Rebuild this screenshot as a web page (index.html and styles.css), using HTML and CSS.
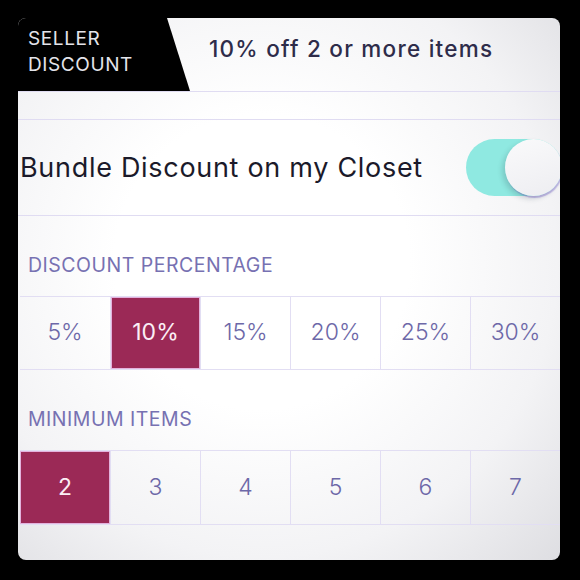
FILE: index.html
```html
<!DOCTYPE html>
<html lang="en">
<head>
    <meta charset="UTF-8">
    <meta name="viewport" content="width=device-width, initial-scale=1.0">
    <title>Seller Discount</title>
    <link rel="stylesheet" href="styles.css">
</head>
<body>

<div class="panel">
    <div class="head">
        <div class="tag">SELLER<br>DISCOUNT</div>
        <div class="offer">10% off 2 or more items</div>
    </div>

    <div class="spacer"></div>

    <div class="bundle">
        <span class="bundle-text">Bundle Discount on my Closet</span>
        <div class="toggle on">
            <div class="knob"></div>
        </div>
    </div>

    <h3 class="section-label">DISCOUNT PERCENTAGE</h3>
    <div class="choices percent">
        <div class="choice">5%</div>
        <div class="choice selected">10%</div>
        <div class="choice">15%</div>
        <div class="choice">20%</div>
        <div class="choice">25%</div>
        <div class="choice">30%</div>
    </div>

    <h3 class="section-label">MINIMUM ITEMS</h3>
    <div class="choices items">
        <div class="choice selected">2</div>
        <div class="choice">3</div>
        <div class="choice">4</div>
        <div class="choice">5</div>
        <div class="choice">6</div>
        <div class="choice">7</div>
    </div>
</div>

</body>
</html>
```

FILE: styles.css
```css
body {
    font-family: 'Inter', 'Liberation Sans', sans-serif;
    background-color: #000;
    margin: 0;
    padding: 0;
}

.panel {
    margin: 18px;
    width: 542px;
    height: 542px;
    border-radius: 8px;
    overflow: hidden;
    background: radial-gradient(ellipse at 45% 45%, #ffffff 35%, #f3f3f5 70%, #dedee2 100%);
}

/* top strip with the black tag */
.head {
    display: flex;
    height: 73px;
    border-bottom: 1px solid #e0dcf2;
}

.tag {
    width: 162px;
    padding: 8px 0 0 10px;
    background-color: #000;
    color: #e4e4ea;
    font-size: 19px;
    line-height: 26px;
    letter-spacing: 0.6px;
    clip-path: polygon(0 0, 149px 0, 172px 100%, 0 100%);
}

.offer {
    padding: 17px 0 0 19px;
    color: #2e2c4a;
    font-size: 22.5px;
    font-weight: 500;
    letter-spacing: 1.25px;
}

.spacer {
    height: 27px;
    border-bottom: 1px solid #e0dcf2;
}

.bundle {
    display: flex;
    align-items: center;
    justify-content: space-between;
    height: 95px;
    padding-left: 2px;
    border-bottom: 1px solid #e0dcf2;
}

.bundle-text {
    color: #1b1a2a;
    font-size: 27px;
    letter-spacing: 0.7px;
}

.toggle {
    width: 96px;
    height: 57px;
    border-radius: 29px;
    margin-right: -2px;
    background-color: #8fe9e1;
    display: flex;
    justify-content: flex-end;
}

.knob {
    width: 57px;
    height: 57px;
    border-radius: 50%;
    background: linear-gradient(160deg, #fafafb, #ededf1);
    box-shadow: -3px 3px 5px rgba(40, 60, 70, 0.18), 1px 2px 1px rgba(130, 110, 210, 0.45);
}

.section-label {
    margin: 37px 0 0 10px;
    color: #7771b2;
    font-size: 19.5px;
    font-weight: 400;
    line-height: 24px;
    letter-spacing: 0.5px;
}

.choices {
    display: grid;
    grid-template-columns: repeat(6, 90px);
    margin: 19px 0 0 2px;
    border-top: 1px solid #e2def3;
    border-bottom: 1px solid #e2def3;
}

.choices.percent {
    height: 72px;
    margin-bottom: 27px;
}

.choices.items {
    height: 73px;
}

.choice {
    display: flex;
    align-items: center;
    justify-content: center;
    border-left: 1px solid #e2def3;
    color: #6d68a8;
    font-size: 23px;
    font-weight: 300;
    padding-bottom: 2px;
}

.choice:first-child {
    border-left: none;
}

.choice.selected {
    background-color: #9b2956;
    color: #fbeef5;
    font-weight: 400;
    box-shadow: inset 0 0 0 1px #e3b2dc;
}
```
